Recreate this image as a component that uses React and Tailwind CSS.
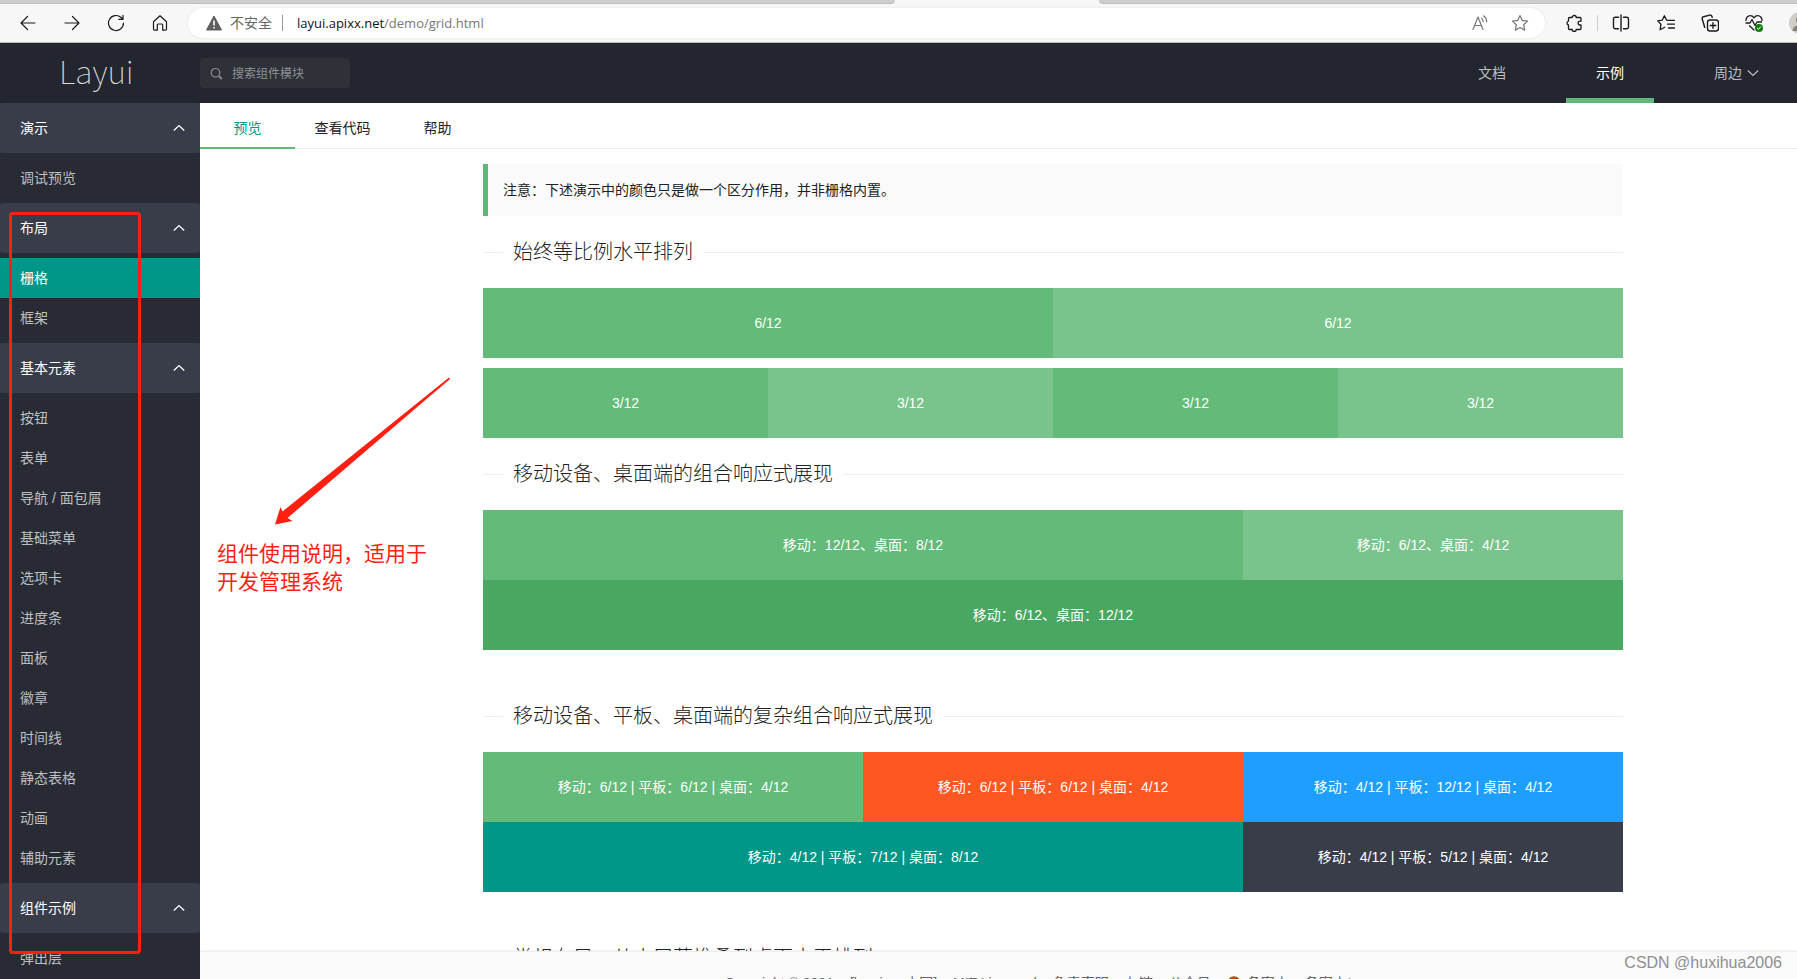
import React, { useState } from "react";

const menu = [
  { title: "演示", items: ["调试预览"] },
  { title: "布局", items: ["栅格", "框架"] },
  {
    title: "基本元素",
    items: [
      "按钮",
      "表单",
      "导航 / 面包屑",
      "基础菜单",
      "选项卡",
      "进度条",
      "面板",
      "徽章",
      "时间线",
      "静态表格",
      "动画",
      "辅助元素",
    ],
  },
  { title: "组件示例", items: ["弹出层"] },
];

const tabs = ["预览", "查看代码", "帮助"];

function Icon({ children, className = "", size = 18, stroke = 1.2 }) {
  return (
    <svg
      width={size}
      height={size}
      viewBox="0 0 18 18"
      fill="none"
      stroke="currentColor"
      strokeWidth={stroke}
      strokeLinecap="round"
      strokeLinejoin="round"
      className={`shrink-0 ${className}`}
    >
      {children}
    </svg>
  );
}

function ToolButton({ label, children }) {
  return (
    <button type="button" aria-label={label} className="flex w-11 justify-center">
      {children}
    </button>
  );
}

function Chevron({ up }) {
  return (
    <svg width="12" height="8" viewBox="0 0 12 8" fill="none" stroke="currentColor" strokeWidth="1.2">
      <path d={up ? "M.8 6.5 6 1.5l5.2 5" : "M.8 1.5 6 6.5l5.2-5"} />
    </svg>
  );
}

function BrowserBar() {
  return (
    <div className="shrink-0 border-b border-[#b5c0b6] bg-[#f7f7f7] text-[#1b1b1b]">
      <div className="flex h-1">
        <div className="flex-1 rounded-br border-b border-[#bdbdbd] bg-[#cdcdcd]" />
        <div className="w-[204px]" />
        <div className="w-[698px] rounded-bl border-b border-[#bdbdbd] bg-[#cdcdcd]" />
      </div>
      <div className="flex h-[38px] items-center pl-[6px]">
        <ToolButton label="后退">
          <Icon>
            <path d="M16 9H2M8.5 2.5 2 9l6.5 6.5" />
          </Icon>
        </ToolButton>
        <ToolButton label="前进">
          <Icon>
            <path d="M2 9h14M9.5 2.5 16 9l-6.5 6.5" />
          </Icon>
        </ToolButton>
        <ToolButton label="刷新">
          <Icon>
            <path d="M16.5 9a7.5 7.5 0 1 1-2.4-5.5L16 5.2M16 1.3v4h-4.2" />
          </Icon>
        </ToolButton>
        <ToolButton label="主页">
          <Icon>
            <path d="M2.5 7.7 9 1.8l6.5 5.9V15a1.2 1.2 0 0 1-1.2 1.2h-2.6V11a1 1 0 0 0-1-1H7.3a1 1 0 0 0-1 1v5.2H3.7A1.2 1.2 0 0 1 2.5 15Z" />
          </Icon>
        </ToolButton>
        <div className="ml-[6px] flex h-[30px] flex-1 items-center rounded-full bg-white pl-[17px] shadow-[0_0_3px_rgba(0,0,0,0.08)]">
          <svg width="18" height="18" viewBox="0 0 18 18">
            <path d="M9 2 16.5 16h-15Z" fill="#5f5f5f" stroke="#5f5f5f" strokeWidth="1" strokeLinejoin="round" />
            <path d="M9 6.5v5M9 13v1.5" stroke="#fff" strokeWidth="1.6" />
          </svg>
          <span className="ml-[7px] text-sm text-[#666]">不安全</span>
          <span className="mx-[10px] h-4 w-px bg-[#999]" />
          <span className="ml-1 pt-px font-['Open_Sans','Noto_Sans_CJK_SC',sans-serif] text-[13px] text-[#111]">
            layui.apixx.net<span className="text-[#777]">/demo/grid.html</span>
          </span>
          <span className="ml-auto flex items-center gap-[22px] pr-4 text-[#777]">
            <Icon>
              <path d="M2 15.5 7 3l5 12.5M3.8 11.5h6.4M10.5 4.2c1.2.8 1.7 2 1.7 3.5M12.5 1.8c2 1.4 3.2 3.4 3.2 6" />
            </Icon>
            <Icon>
              <path d="m9 1.5 2.3 4.9 5.3.7-3.9 3.7 1 5.3L9 13.5l-4.7 2.6 1-5.3L1.4 7.1l5.3-.7Z" />
            </Icon>
          </span>
        </div>
        <div className="flex items-center pl-5">
          <Icon stroke={1.3}>
            <path d="M4.5 3.5h2.7a2 2 0 0 1 4 0H15a1 1 0 0 1 1 1v2.7h-1a1.9 1.9 0 0 0 0 3.8h1v3.5a1 1 0 0 1-1 1h-3.8a2 2 0 0 1-4 0H4.5a1 1 0 0 1-1-1V11a2 2 0 0 1 0-3.9V4.5a1 1 0 0 1 1-1Z" />
          </Icon>
          <span className="mx-[14px] h-4 w-px bg-[#ccc]" />
          <Icon stroke={1.4}>
            <path d="M9 1v16M6.5 3.3H3.2A1.7 1.7 0 0 0 1.5 5v8a1.7 1.7 0 0 0 1.7 1.7h3.3M11.5 3.3h3.3A1.7 1.7 0 0 1 16.5 5v8a1.7 1.7 0 0 1-1.7 1.7h-3.3" />
          </Icon>
          <Icon className="ml-[27px]" stroke={1.3}>
            <path d="M11 6.4 9.6 6.2 7.4 1.8 5.2 6.2l-4.5.7 3.2 3.4-.8 5.5 4.6-2.5M11.5 6.4h6M10.5 10.2h7M11.5 14h6" />
          </Icon>
          <Icon className="ml-[26px]" stroke={1.4}>
            <rect x="6.5" y="6" width="11" height="11" rx="2.5" />
            <path d="M12 8.7v5.6M9.2 11.5h5.6M3.7 13.3 1.3 5.2a2 2 0 0 1 1.3-2.5l6-1.6A2 2 0 0 1 11 2.6l.2.7" />
          </Icon>
          <Icon className="ml-[26px]" stroke={1.3}>
            <path d="M1 6.5C.8 3.6 3 1.6 5.2 1.6c1.6 0 2.9.8 3.8 2.2.9-1.4 2.2-2.2 3.8-2.2C15 1.6 17.2 3.6 17 6.5M1 9h4l2-3.5 3 6 2-3.5h4.5M4.5 11.8 9 16" />
            <circle cx="14" cy="14" r="4" fill="#107c10" stroke="none" />
            <path d="m12.3 14.2 1.2 1.1 2.2-2.5" stroke="#fff" strokeWidth="1" />
          </Icon>
          <div className="ml-[26px] w-2 overflow-hidden">
            <svg width="22" height="22" viewBox="0 0 22 22">
              <circle cx="11" cy="11" r="11" fill="#cfcdc9" />
              <circle cx="11" cy="8" r="4" fill="#85827e" />
              <path d="M3.5 19c0-4 3.5-6 7.5-6s7.5 2 7.5 6Z" fill="#85827e" />
            </svg>
          </div>
        </div>
      </div>
    </div>
  );
}

function Header() {
  return (
    <header className="flex h-[60px] shrink-0 items-center bg-[#23262e]">
      <a
        href="#home"
        className="w-[200px] pb-1.5 pl-[59px] font-['Noto_Sans_CJK_SC',sans-serif] text-[32px] leading-[54px] font-thin text-[#ddd]"
      >
        Layui
      </a>
      <label className="flex h-[30px] w-[150px] items-center gap-[9px] rounded-sm bg-[#2f3139] pl-[10px] text-[#8a8c90]">
        <svg width="13" height="13" viewBox="0 0 13 13" fill="none" stroke="currentColor" strokeWidth="1.2">
          <circle cx="5.5" cy="5.8" r="4.3" />
          <path d="m8.8 9 3 3" strokeWidth="1.8" />
        </svg>
        <input
          aria-label="搜索组件模块"
          placeholder="搜索组件模块"
          className="w-[110px] bg-transparent pt-0.5 text-xs outline-none placeholder:text-[#8e9094]"
        />
      </label>
      <nav className="ml-auto flex h-full items-center gap-[30px] pr-[38px] text-sm text-[#bdbec0]">
        <a href="#doc" className="px-[30px]">
          文档
        </a>
        <a href="#demo" className="flex h-full items-center border-b-[5px] border-[#5fb878] px-[30px] pt-[5px] text-white">
          示例
        </a>
        <a href="#more" className="flex items-center gap-[5px] pl-[30px]">
          周边
          <Chevron />
        </a>
      </nav>
    </header>
  );
}

function Sidebar({ current, onSelect }) {
  return (
    <aside className="w-[200px] shrink-0 overflow-hidden bg-[#282b33] text-sm">
      {menu.map((group) => (
        <div key={group.title}>
          <button
            type="button"
            className="flex h-[50px] w-full items-center justify-between rounded-xs bg-[#393d49] pr-[15px] pl-5 text-white"
          >
            {group.title}
            <Chevron up />
          </button>
          <div className="py-[5px]">
            {group.items.map((item) => (
              <a
                key={item}
                href="#item"
                onClick={() => onSelect(item)}
                className={
                  item === current
                    ? "block h-10 bg-[#009688] pl-5 leading-10 text-white"
                    : "block h-10 pl-5 leading-10 text-[#bebfc1]"
                }
              >
                {item}
              </a>
            ))}
          </div>
        </div>
      ))}
    </aside>
  );
}

function Title({ children }) {
  return (
    <h2 className="flex h-[72px] items-center text-xl font-light text-[#222]">
      <span className="h-px w-5 bg-[#eee]" />
      <span className="px-[10px]">{children}</span>
      <span className="h-px flex-1 bg-[#eee]" />
    </h2>
  );
}

function Cell({ className, children }) {
  return <div className={`h-[70px] text-center leading-[70px] ${className}`}>{children}</div>;
}

function GridDemo() {
  return (
    <div className="pt-[15px] pr-[174px] pl-[283px] text-sm text-white">
      <blockquote className="border-l-[5px] border-[#5fb878] bg-[#fafafa] px-[15px] leading-[52px] text-[#222]">
        注意：下述演示中的颜色只是做一个区分作用，并非栅格内置。
      </blockquote>

      <Title>始终等比例水平排列</Title>
      <div className="grid grid-cols-2">
        <Cell className="bg-[#63ba79]">6/12</Cell>
        <Cell className="bg-[#79c48c]">6/12</Cell>
      </div>
      <div className="mt-[10px] grid grid-cols-4">
        <Cell className="bg-[#63ba79]">3/12</Cell>
        <Cell className="bg-[#79c48c]">3/12</Cell>
        <Cell className="bg-[#63ba79]">3/12</Cell>
        <Cell className="bg-[#79c48c]">3/12</Cell>
      </div>

      <Title>移动设备、桌面端的组合响应式展现</Title>
      <div className="mb-[30px] grid grid-cols-12">
        <Cell className="col-span-8 bg-[#63ba79]">移动：12/12、桌面：8/12</Cell>
        <Cell className="col-span-4 bg-[#79c48c]">移动：6/12、桌面：4/12</Cell>
        <Cell className="col-span-12 bg-[#49a761]">移动：6/12、桌面：12/12</Cell>
      </div>

      <Title>移动设备、平板、桌面端的复杂组合响应式展现</Title>
      <div className="mb-[30px] grid grid-cols-12">
        <Cell className="col-span-4 bg-[#63ba79]">移动：6/12 | 平板：6/12 | 桌面：4/12</Cell>
        <Cell className="col-span-4 bg-[#ff5722]">移动：6/12 | 平板：6/12 | 桌面：4/12</Cell>
        <Cell className="col-span-4 bg-[#1e9fff]">移动：4/12 | 平板：12/12 | 桌面：4/12</Cell>
        <Cell className="col-span-8 bg-[#009688]">移动：4/12 | 平板：7/12 | 桌面：8/12</Cell>
        <Cell className="col-span-4 bg-[#393d49]">移动：4/12 | 平板：5/12 | 桌面：4/12</Cell>
      </div>

      <Title>常规布局：从小屏幕堆叠到桌面水平排列</Title>
    </div>
  );
}

function Footer() {
  return (
    <footer className="flex h-7 shrink-0 items-start justify-center gap-4 overflow-hidden border-t border-[#eee] bg-[#fafafa] pt-[21px] pl-[80px] text-sm text-[#666] shadow-[0_-1px_2px_rgba(0,0,0,0.05)]">
      <span>Copyright © 2021</span>
      <span>[layui.cn 中国]</span>
      <span>MIT Licensed</span>
      <a href="#disclaimer">免责声明</a>
      <a href="#links">友链</a>
      <a href="#wechat">公众号</a>
      <span className="flex gap-[6px]">
        <svg width="14" height="14" viewBox="0 0 14 14" className="mt-[3px]">
          <circle cx="7" cy="7" r="6" fill="#e33c1e" stroke="#9a5a20" strokeWidth="1.5" />
        </svg>
        备案中
      </span>
      <span>备案中*</span>
    </footer>
  );
}

// red marks drawn over the page
function Annotations() {
  return (
    <div className="pointer-events-none">
      <div className="absolute top-[212px] left-[9px] h-[742px] w-[132px] rounded border-[3px] border-[#ff1f10]" />
      <svg className="absolute top-[374px] left-[270px]" width="184" height="154" viewBox="270 374 184 154">
        <path d="M449 377.5 282.5 511.5 280.5 507 275 524.5 292.5 521 287.5 518 450 379Z" fill="#ff1f10" />
      </svg>
      <p className="absolute top-[540px] left-[217px] w-[220px] text-[21px] leading-7 text-[#ff1f10]">
        组件使用说明，适用于开发管理系统
      </p>
      <p className="absolute right-[15px] bottom-1 text-base leading-6 text-[#8f8f8f]">CSDN @huxihua2006</p>
    </div>
  );
}

function App() {
  const [current, setCurrent] = useState("栅格");
  const [tab, setTab] = useState("预览");

  return (
    <div className="relative flex h-screen flex-col overflow-hidden bg-white font-['Liberation_Sans','Noto_Sans_CJK_SC',sans-serif]">
      <BrowserBar />
      <Header />
      <div className="flex min-h-0 flex-1">
        <Sidebar current={current} onSelect={setCurrent} />
        <main className="flex min-w-0 flex-1 flex-col">
          <div className="flex h-[46px] shrink-0 border-b border-[#eee] text-sm text-[#222]">
            {tabs.map((name) => (
              <button
                key={name}
                type="button"
                onClick={() => setTab(name)}
                className={
                  name === tab
                    ? "h-[46px] w-[95px] border-b-2 border-[#5fb878] pt-1.5 text-[#009688]"
                    : "h-[46px] w-[95px] pt-1"
                }
              >
                {name}
              </button>
            ))}
          </div>
          <div className="min-h-0 flex-1 overflow-hidden">
            <GridDemo />
          </div>
          <Footer />
        </main>
      </div>
      <Annotations />
    </div>
  );
}

export default App;
